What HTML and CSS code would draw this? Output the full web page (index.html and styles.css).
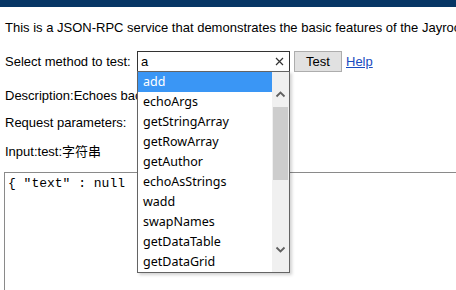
FILE: index.html
```html
<!DOCTYPE html>
<html>
<head>
<meta charset="utf-8">
<link rel="stylesheet" href="styles.css">
</head>
<body>
<div class="topbar"></div>
<div class="content">
  <p class="intro">This is a JSON-RPC service that demonstrates the basic features of the Jayrock library.</p>
  <div class="select-row">
    <label class="label">Select method to test:</label>
    <div class="combo">
      <div class="input"><span>a</span>
        <svg class="clear" width="9" height="9" viewBox="0 0 9 9"><path d="M1 1L8 8M8 1L1 8" stroke="#333" stroke-width="1.2"/></svg>
      </div>
      <div class="dropdown">
        <ul class="items">
          <li class="active">add</li>
          <li>echoArgs</li>
          <li>getStringArray</li>
          <li>getRowArray</li>
          <li>getAuthor</li>
          <li>echoAsStrings</li>
          <li>wadd</li>
          <li>swapNames</li>
          <li>getDataTable</li>
          <li>getDataGrid</li>
        </ul>
        <div class="scrollbar">
          <svg class="arrow" width="17" height="17" viewBox="0 0 17 17"><path d="M4.5 10.5L8.5 6.5L12.5 10.5" fill="none" stroke="#606060" stroke-width="1.8"/></svg>
          <div class="track"><div class="thumb"></div></div>
          <svg class="arrow" width="17" height="17" viewBox="0 0 17 17"><path d="M4.5 6.5L8.5 10.5L12.5 6.5" fill="none" stroke="#606060" stroke-width="1.8"/></svg>
        </div>
      </div>
    </div>
    <button class="btn">Test</button>
    <a class="help" href="#">Help</a>
  </div>
  <p class="line desc">Description:Echoes back the input</p>
  <p class="line req">Request parameters:</p>
  <p class="line inp">Input:test:字符串</p>
  <div class="textarea">{ "text" : null</div>
</div>
</body>
</html>
```
FILE: styles.css
```css
html, body {
  margin: 0;
  padding: 0;
  overflow: hidden;
  background: #fff;
  width: 456px;
  height: 290px;
}
body {
  font-family: "Liberation Sans", Arial, "Noto Sans CJK SC", sans-serif;
  font-size: 13px;
  color: #000;
}
.topbar {
  height: 7px;
  background: #073665;
}
.content {
  padding-left: 5px;
}
.intro {
  margin: 13px 0 0;
  line-height: 15px;
  white-space: nowrap;
}
.select-row {
  display: flex;
  align-items: center;
  margin-top: 16px;
  height: 21px;
}
.label {
  width: 132px;
}
.combo {
  position: relative;
  width: 153px;
  height: 21px;
}
.input {
  box-sizing: border-box;
  height: 21px;
  border: 1px solid #333;
  display: flex;
  align-items: center;
  justify-content: space-between;
  padding: 0 5px 0 3px;
  font-size: 13px;
  background: #fff;
}
.clear {
  display: block;
}
.dropdown {
  position: absolute;
  left: 0;
  top: 20px;
  width: 153px;
  box-sizing: border-box;
  border: 1px solid #646464;
  background: #fff;
  display: flex;
  box-shadow: 2px 2px 3px rgba(0,0,0,0.18);
  z-index: 5;
}
.items {
  list-style: none;
  margin: 0;
  padding: 0;
  flex: 1;
  font-family: "Noto Sans", "Noto Sans CJK SC", sans-serif;
  font-size: 12.5px;
}
.items li {
  height: 20px;
  line-height: 20px;
  padding-left: 5px;
  color: #000;
}
.items li.active {
  background: #3a96f5;
  color: #fff;
}
.scrollbar {
  width: 17px;
  background: #f0f0f0;
  display: flex;
  flex-direction: column;
}
.arrow {
  display: block;
}
.arrow:first-child {
  margin-top: 14px;
  margin-bottom: 4px;
}
.track {
  flex: 1;
}
.thumb {
  margin: 0 1px;
  height: 73px;
  background: #cdcdcd;
}
.scrollbar .arrow:last-child {
  margin-bottom: 14px;
}
.btn {
  box-sizing: border-box;
  margin-left: 4px;
  width: 48px;
  height: 21px;
  border: 1px solid #adadad;
  background: #e1e1e1;
  font-family: "Liberation Sans", Arial, sans-serif;
  font-size: 13px;
  color: #000;
  padding: 0;
}
.help {
  margin-left: 4px;
  color: #1a4cc0;
  text-decoration: underline;
}
.line {
  margin: 0;
  line-height: 15px;
  white-space: nowrap;
}
.desc { margin-top: 16px; }
.req { margin-top: 12px; }
.inp { margin-top: 14px; }
.textarea {
  margin-top: 13px;
  margin-left: -1px;
  width: 520px;
  height: 140px;
  border: 1px solid #8a8a8a;
  padding: 3px 3px;
  font-family: "Liberation Mono", "Courier New", monospace;
  font-size: 13px;
  line-height: 15px;
  white-space: pre;
}
```
